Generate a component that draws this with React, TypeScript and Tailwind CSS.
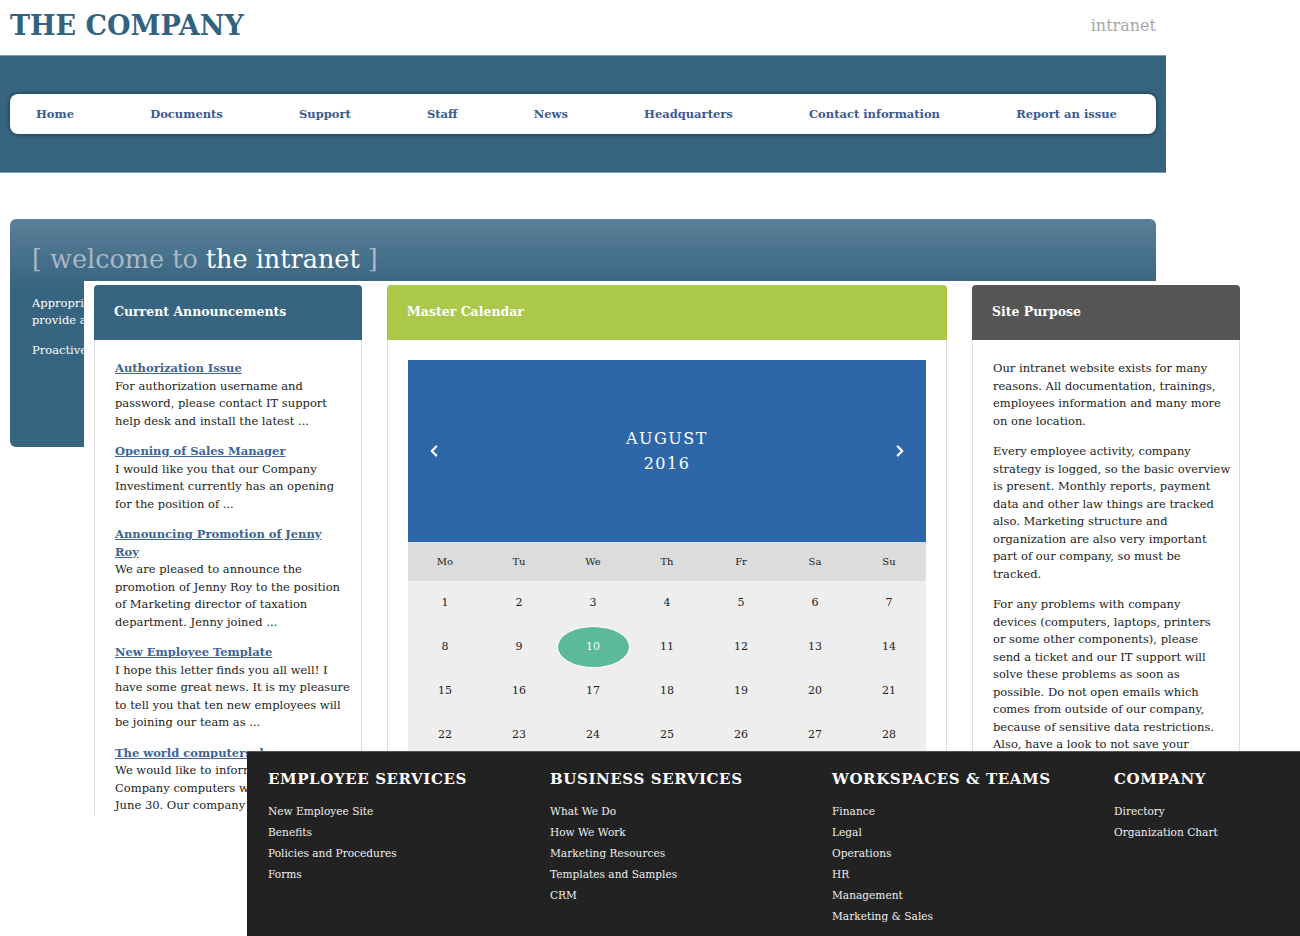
import { ChevronLeft, ChevronRight } from 'lucide-react';

const navLinks = ['Home', 'Documents', 'Support', 'Staff', 'News', 'Headquarters', 'Contact information', 'Report an issue'];

const announcements = [
  { title: ['Authorization Issue'], body: ['For authorization username and', 'password, please contact IT support', 'help desk and install the latest ...'] },
  { title: ['Opening of Sales Manager'], body: ['I would like you that our Company', 'Investiment currently has an opening', 'for the position of ...'] },
  { title: ['Announcing Promotion of Jenny', 'Roy'], body: ['We are pleased to announce the', 'promotion of Jenny Roy to the position', 'of Marketing director of taxation', 'department. Jenny joined ...'] },
  { title: ['New Employee Template'], body: ['I hope this letter finds you all well! I', 'have some great news. It is my pleasure', 'to tell you that ten new employees will', 'be joining our team as ...'] },
  { title: ['The world computers day'], body: ['We would like to inform you that all', 'Company computers will be updated on', 'June 30. Our company ...'] },
];

const purpose = [
  ['Our intranet website exists for many', 'reasons. All documentation, trainings,', 'employees information and many more', 'on one location.'],
  ['Every employee activity, company', 'strategy is logged, so the basic overview', 'is present. Monthly reports, payment', 'data and other law things are tracked', 'also. Marketing structure and', 'organization are also very important', 'part of our company, so must be', 'tracked.'],
  ['For any problems with company', 'devices (computers, laptops, printers', 'or some other components), please', 'send a ticket and our IT support will', 'solve these problems as soon as', 'possible. Do not open emails which', 'comes from outside of our company,', 'because of sensitive data restrictions.', 'Also, have a look to not save your', 'passwords on public computers.'],
];

const footerCols = [
  { title: 'Employee Services', links: ['New Employee Site', 'Benefits', 'Policies and Procedures', 'Forms'] },
  { title: 'Business Services', links: ['What We Do', 'How We Work', 'Marketing Resources', 'Templates and Samples', 'CRM'] },
  { title: 'Workspaces & Teams', links: ['Finance', 'Legal', 'Operations', 'HR', 'Management', 'Marketing & Sales'] },
  { title: 'Company', links: ['Directory', 'Organization Chart'] },
];

const weekDays = ['Mo', 'Tu', 'We', 'Th', 'Fr', 'Sa', 'Su'];

const Lines = ({ lines }: { lines: string[] }) => (
  <>
    {lines.map((l, i) => (
      <span key={i}>
        {l}
        {i < lines.length - 1 && <br />}
      </span>
    ))}
  </>
);

const Card = ({ title, color, width, children }: { title: string; color: string; width: string; children: React.ReactNode }) => (
  <div className={`${width} shrink-0 flex flex-col`}>
    <div className={`${color} shrink-0 h-[55px] rounded-t-[4px] flex items-center px-[20px] text-white font-bold text-[12.5px]`}>{title}</div>
    <div className="flex-1 min-h-0 border-x border-[#dddddd] bg-white p-[20px]">{children}</div>
  </div>
);

const Calendar = () => {
  const days: (number | null)[] = Array.from({ length: 35 }, (_, i) => (i < 31 ? i + 1 : null));
  return (
    <div>
      <div className="h-[182px] bg-[#2e67a8] flex items-center justify-between px-[17px] text-white">
        <ChevronLeft size={18} strokeWidth={3} />
        <div className="text-center text-[16px] tracking-[1.5px] leading-[25px]">
          AUGUST
          <br />
          2016
        </div>
        <ChevronRight size={18} strokeWidth={3} />
      </div>
      <div className="h-[39px] bg-[#dcdcdc] grid grid-cols-7 items-center text-center text-[10px]">
        {weekDays.map(d => (
          <span key={d}>{d}</span>
        ))}
      </div>
      <div className="bg-[#eeeeee] grid grid-cols-7 text-center text-[11px]">
        {days.map((d, i) => (
          <div key={i} className="h-[44px] flex items-center justify-center">
            {d === 10 ? (
              <span className="w-[73px] h-[42px] rounded-[50%] bg-[#5cb99b] border border-white text-white flex items-center justify-center">10</span>
            ) : (
              d
            )}
          </div>
        ))}
      </div>
    </div>
  );
};

export default function App() {
  return (
    <div className="min-h-[936px] bg-white text-[#222222] font-['DejaVu_Serif',Georgia,serif] overflow-hidden">
      <header className="w-[1166px] h-[55px] flex items-start justify-between px-[10px] pt-[9px]">
        <h1 className="text-[27px] font-bold text-[#336180] leading-[34px]">THE COMPANY</h1>
        <span className="text-[16px] text-[#a8a8a8] leading-[34px]">intranet</span>
      </header>

      <div className="w-[1166px] h-[118px] bg-[#376480] border-y border-[#7f9db1] pt-[38px] px-[10px]">
        <nav className="h-[40px] bg-white rounded-[8px] shadow-[0_0_4px_rgba(0,0,0,0.55)] flex items-center justify-between pl-[26px] pr-[39px]">
          {navLinks.map(l => (
            <a key={l} href="#" className="text-[11.5px] font-bold text-[#3b5b8f] pt-[2px]">
              {l}
            </a>
          ))}
        </nav>
      </div>

      <section className="mt-[46px] ml-[10px] w-[1146px] h-[228px] rounded-[6px] bg-linear-to-b from-[#5b8099] to-[#376480] to-[30%] px-[22px] pt-[22px]">
        <h2 className="text-[25.5px] leading-[36px] text-[#a7b9c6]">
          [ welcome to <span className="text-white">the intranet</span> ]
        </h2>
        <p className="mt-[18px] text-[11.5px] leading-[17px] text-white">
          Appropriately disseminate user-centric intranet content to
          <br />
          provide a single point of access for every employee.
        </p>
        <p className="mt-[13px] text-[11.5px] leading-[17px] text-white">Proactively share news, documents and company resources.</p>
      </section>

      <main className="relative -mt-[166px] ml-[84px] w-[1166px] h-[534px] overflow-hidden bg-white pl-[10px] pt-[4px] flex gap-[25px]">
        <Card title="Current Announcements" color="bg-[#376480]" width="w-[268px]">
          <div className="text-[11.5px] leading-[17.5px] whitespace-nowrap">
            {announcements.map(a => (
              <div key={a.title[0]} className="mb-[13px]">
                <a href="#" className="font-bold text-[#3d6496] underline">
                  <Lines lines={a.title} />
                </a>
                <p>
                  <Lines lines={a.body} />
                </p>
              </div>
            ))}
          </div>
        </Card>

        <Card title="Master Calendar" color="bg-[#abc84b]" width="w-[560px]">
          <Calendar />
        </Card>

        <Card title="Site Purpose" color="bg-[#555555]" width="w-[268px]">
          <div className="text-[11.5px] leading-[17.5px] whitespace-nowrap">
            {purpose.map((p, i) => (
              <p key={i} className="mb-[13px]">
                <Lines lines={p} />
              </p>
            ))}
          </div>
        </Card>
      </main>

      <footer className="relative z-10 -mt-[64px] ml-[247px] w-[1053px] h-[200px] bg-[#222222] border-t border-[#555555] grid grid-cols-[282px_282px_282px_1fr] pl-[21px] pt-[16px] text-white">
        {footerCols.map(c => (
          <div key={c.title}>
            <h3 className="text-[15px] font-bold uppercase tracking-[0.6px] leading-[22px]">{c.title}</h3>
            <ul className="mt-[11px] text-[10.6px] leading-[21px] text-[#eeeeee]">
              {c.links.map(l => (
                <li key={l}>{l}</li>
              ))}
            </ul>
          </div>
        ))}
      </footer>
    </div>
  );
}
